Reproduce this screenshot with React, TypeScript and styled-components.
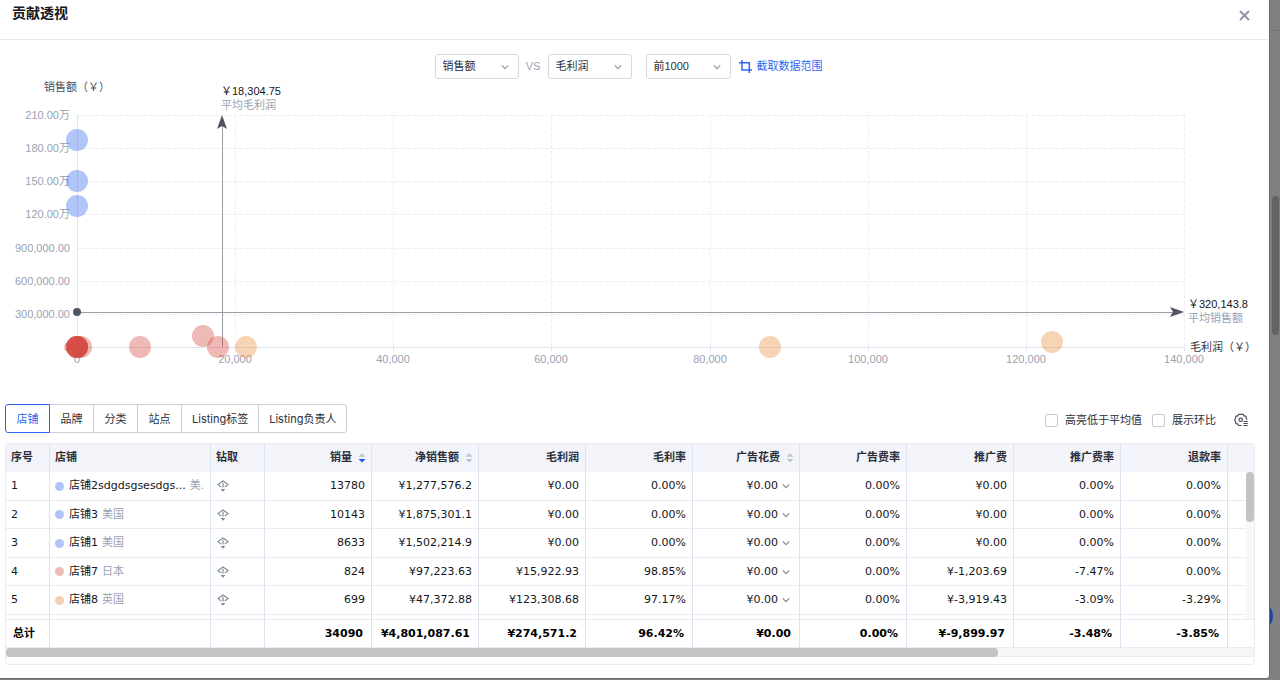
import React, { useState } from "react";
import styled, { createGlobalStyle, css } from "styled-components";

const color = {
  text: "#2b2e38",
  strong: "#14161c",
  muted: "#9aa1b3",
  blue: "#2f66f5",
  border: "#d6d9e0",
  cell: "#dde2f0",
  row: "#e9ebf6",
  head: "#f3f4f9",
};

const uiFont = '"Inter", "Noto Sans CJK SC", sans-serif';
const plainFont = '"Liberation Sans", "Noto Sans CJK SC", sans-serif';
const tableFont = '"DejaVu Sans", "Noto Sans CJK SC", sans-serif';

const GlobalStyle = createGlobalStyle`
  *, *::before, *::after { box-sizing: border-box; }
  body {
    margin: 0;
    background: #808080;
    color: ${color.text};
    font-family: ${uiFont};
    font-size: 11px;
    line-height: 16px;
  }
  button, select, input { font: inherit; color: inherit; margin: 0; }
  button { background: none; border: 0; padding: 0; cursor: pointer; }
`;

const Backdrop = styled.div`
  position: relative;
  padding: 0 11px 2px 0;
  overflow: hidden;
  background: linear-gradient(#747474, #747474) 0 30px / 100% 1px no-repeat #808080;
`;

const PageThumb = styled.div`
  position: absolute;
  top: 196px;
  right: 1px;
  width: 7px;
  height: 139px;
  border-radius: 4px;
  background: #636363;
`;

const HelpBubble = styled.div`
  position: absolute;
  top: 601px;
  right: 7px;
  width: 30px;
  height: 30px;
  border-radius: 50%;
  background: #1f419c;
`;

const Dialog = styled.section`
  position: relative;
  background: #fff;
  border-radius: 0 0 3px 0;
  box-shadow: 1px 0 0 #6c6c6c, 0 1px 0 #6c6c6c;
  padding-bottom: 13px;
`;

const DialogHeader = styled.header`
  display: flex;
  align-items: flex-start;
  justify-content: space-between;
  height: 40px;
  padding: 3px 19px 0 12px;
  border-bottom: 1px solid #e9eaec;
`;

const Title = styled.h2`
  margin: 0;
  font-size: 14px;
  line-height: 20px;
  font-weight: 600;
  color: ${color.strong};
`;

const IconButton = styled.button`
  display: inline-flex;
  align-items: center;
  justify-content: center;
  color: ${(p) => p.color || "#7f8799"};
`;

const CloseButton = styled(IconButton)`
  height: 25px;
`;

const Filters = styled.div`
  display: flex;
  align-items: center;
  justify-content: center;
  height: 40px;
  padding: 12px 12px 0 0;
  font-family: ${plainFont};
`;

const SelectBox = styled.div<{ $width: number }>`
  position: relative;
  width: ${(p) => p.$width}px;
  svg {
    position: absolute;
    right: 10px;
    top: 9px;
    pointer-events: none;
    color: #8e94a3;
  }
`;

const Select = styled.select`
  appearance: none;
  display: block;
  width: 100%;
  height: 25px;
  padding: 0 20px 0 7px;
  border: 1px solid ${color.border};
  border-radius: 3px;
  background: #fff;
`;

const Versus = styled.span`
  width: 29px;
  text-align: center;
  color: ${color.muted};
`;

const RangeFilter = styled.div`
  display: flex;
  align-items: center;
  gap: 8px;
  margin-left: 14px;
`;

const CropButton = styled.button`
  display: flex;
  align-items: center;
  gap: 5px;
  color: ${color.blue};
`;

const Chart = styled.svg`
  display: block;
  width: 100%;
  height: auto;
  font-family: ${plainFont};
  font-size: 11px;
`;

const Panel = styled.div`
  padding: 19px 14px 0 5px;
`;

const PanelBar = styled.div`
  display: flex;
  align-items: center;
  justify-content: space-between;
  margin-bottom: 10px;
`;

const Tabs = styled.div`
  display: flex;
`;

const Tab = styled.button<{ $active: boolean }>`
  position: relative;
  min-width: 45px;
  height: 29px;
  padding: 0 10px;
  border: 1px solid #ccced4;
  background: #fff;
  & + & { margin-left: -1px; }
  &:first-child { border-radius: 3px 0 0 3px; }
  &:last-child { border-radius: 0 3px 3px 0; }
  ${(p) =>
    p.$active &&
    css`
      z-index: 1;
      border-color: ${color.blue};
      color: ${color.blue};
    `}
`;

const Options = styled.div`
  display: flex;
  align-items: center;
  gap: 10px;
  padding: 3px 7px 0 0;
`;

const CheckLabel = styled.label`
  display: flex;
  align-items: center;
  gap: 7px;
`;

const Checkbox = styled.input`
  appearance: none;
  width: 13px;
  height: 13px;
  border: 1px solid #c6c9d0;
  border-radius: 2px;
  background: #fff;
  &:checked { background: ${color.blue}; border-color: ${color.blue}; }
`;

const SettingsButton = styled(IconButton)`
  margin-left: 8px;
`;

const TableCard = styled.div`
  position: relative;
  padding-bottom: 7px;
  border: 1px solid ${color.row};
  border-radius: 3px;
  overflow: hidden;
`;

const Table = styled.table`
  width: 100%;
  table-layout: fixed;
  border-collapse: separate;
  border-spacing: 0;
  font-family: ${tableFont};
  color: ${color.strong};
`;

const Cell = styled.td<{ $align?: "left" | "right"; $tight?: boolean }>`
  padding: 0 ${(p) => (p.$tight ? 9 : 6)}px 0 5px;
  border-right: 1px solid ${color.cell};
  border-bottom: 1px solid ${color.row};
  text-align: ${(p) => p.$align || "left"};
  white-space: nowrap;
  overflow: hidden;
  &:last-child { border-right: 0; }
`;

const HeadCell = styled(Cell)`
  height: 28px;
  padding-right: ${(p) => (p.$tight ? 5 : 6)}px;
  background: ${color.head};
  border-bottom: 0;
  font-weight: 600;
  color: ${color.text};
`;

const BodyRow = styled.tr`
  height: 29px;
  &:nth-child(even) { height: 28px; }
`;

const ClippedRow = styled.tr`
  height: 5px;
`;

const FootCell = styled(Cell)`
  height: 28px;
  padding: 0 8px 0 7px;
  font-weight: 700;
  color: #000;
`;

const SortButton = styled.button`
  display: inline-flex;
  align-items: center;
  gap: 6px;
`;

const Shop = styled.div`
  display: flex;
  align-items: center;
`;

const Dot = styled.span<{ $fill: string }>`
  flex: none;
  width: 9px;
  height: 9px;
  margin-right: 5px;
  border-radius: 50%;
  background: ${(p) => p.$fill};
`;

const Country = styled.span`
  margin-left: 4px;
  color: ${color.muted};
`;

const DrillButton = styled(IconButton)`
  display: flex;
  padding-left: 1px;
`;

const Cost = styled.span`
  display: inline-flex;
  align-items: center;
  gap: 4px;
`;

const VerticalTrack = styled.div`
  position: absolute;
  top: 28px;
  right: 0;
  width: 8px;
  height: 147px;
  background: #f8f8f9;
`;

const VerticalThumb = styled.div`
  height: 50px;
  border-radius: 4px;
  background: #c3c3c3;
`;

const HorizontalTrack = styled.div`
  height: 9px;
  background: #f6f6f7;
  border-bottom: 1px solid #ececef;
`;

const HorizontalThumb = styled.div`
  width: 79.5%;
  height: 9px;
  border-radius: 4px;
  background: #c3c3c3;
`;

const Chevron = ({ size = 8 }: { size?: number }) => (
  <svg width={size} height={size} viewBox="0 0 8 8" fill="none" stroke="currentColor" aria-hidden="true">
    <path d="M.8 2.4 4 5.6 7.2 2.4" strokeWidth="1.1" />
  </svg>
);

const CloseIcon = () => (
  <svg width="11" height="11" viewBox="0 0 11 11" fill="none" stroke="#8f96a6" aria-hidden="true">
    <path d="M1 1l9 9M10 1l-9 9" strokeWidth="2" />
  </svg>
);

const CropIcon = () => (
  <svg width="13" height="13" viewBox="0 0 13 13" fill="none" stroke="currentColor" aria-hidden="true">
    <path d="M3 0v10h10M0 2.7h10.3V13" strokeWidth="1.5" />
  </svg>
);

const DrillIcon = () => (
  <svg width="12" height="12" viewBox="0 0 12 12" fill="none" stroke="currentColor" aria-hidden="true">
    <path d="M4.2 7.1.9 4.5 6 1l5.1 3.5-3.3 2.6" strokeWidth="1.2" />
    <path d="M6 2.8v4.6" strokeWidth="1.2" />
    <path d="M3.6 8.9h4.8L6 11.7z" fill="currentColor" stroke="none" />
  </svg>
);

const SettingsIcon = () => (
  <svg width="14" height="14" viewBox="0 0 14 14" fill="none" stroke="currentColor" aria-hidden="true">
    <path
      d="M7.6 12.5H4.5L3.8 10.9 1.9 10.6 1.6 8.8.7 6.9l.9-1.8.3-1.9 1.9-.3.9-1.5h4.4l.9 1.5 1.9.3.3 1.9.8 1.4"
      strokeWidth="1.2"
      strokeLinejoin="round"
    />
    <circle cx="6.7" cy="6.8" r="1.7" strokeWidth="1.2" />
    <path d="M9.4 8.5h4.4M9.4 10.5h4.4M9.4 12.5h4.4" strokeWidth="1" />
  </svg>
);

const SortIcon = ({ down }: { down?: boolean }) => (
  <svg width="8" height="10" viewBox="0 0 8 10" aria-hidden="true">
    <path d="M.5 3.8 4 .3l3.5 3.5z" fill="#bfc3cc" />
    <path d="M.5 6 4 9.5 7.500 6z" fill={down ? "#1f56f0" : "#bfc3cc"} />
  </svg>
);

const plot = { left: 77, right: 1184, top: 35, bottom: 267, maxX: 140000, maxY: 2100000 };
const px = (v: number) => plot.left + Math.round((v / plot.maxX) * (plot.right - plot.left));
const py = (v: number) => plot.bottom - Math.round((v / plot.maxY) * (plot.bottom - plot.top));

const xTicks = [0, 20000, 40000, 60000, 80000, 100000, 120000, 140000];
const yTicks: [number, string][] = [
  [0, "0"],
  [300000, "300,000.00"],
  [600000, "600,000.00"],
  [900000, "900,000.00"],
  [1200000, "120.00万"],
  [1500000, "150.00万"],
  [1800000, "180.00万"],
  [2100000, "210.00万"],
];

const tone = { blue: "#2f62f0", red: "#d4403a", orange: "#e88a3a" };
const points: [number, number, string][] = [
  [0, 1875301.1, tone.blue],
  [0, 1502214.9, tone.blue],
  [0, 1277576.2, tone.blue],
  [500, 0, tone.red],
  [0, 0, tone.red],
  [0, 0, tone.red],
  [0, 0, tone.red],
  [0, 0, tone.red],
  [0, 0, tone.red],
  [8000, 0, tone.red],
  [15922.93, 97223.63, tone.red],
  [17800, 0, tone.red],
  [21400, 0, tone.orange],
  [87600, 0, tone.orange],
  [123308.68, 47372.88, tone.orange],
];

const average = { x: 18304.75, y: 320143.8 };

const ContributionChart = () => {
  const ax = px(average.x);
  const ay = py(average.y);
  return (
    <Chart viewBox="0 0 1269 305" role="img" aria-label="贡献透视">
      <g stroke="#eceef6" strokeDasharray="4 2" shapeRendering="crispEdges">
        {yTicks.slice(1).map(([v]) => (
          <line key={v} x1={plot.left} x2={plot.right} y1={py(v)} y2={py(v)} />
        ))}
        {xTicks.slice(1).map((v) => (
          <line key={v} x1={px(v)} x2={px(v)} y1={plot.top} y2={plot.bottom} />
        ))}
      </g>
      <g stroke="#dfe3ee" shapeRendering="crispEdges">
        <line x1={plot.left} x2={plot.left} y1={plot.top} y2={plot.bottom + 4} />
        <line x1={plot.left} x2={plot.right} y1={plot.bottom} y2={plot.bottom} />
        {xTicks.slice(1).map((v) => (
          <line key={v} x1={px(v)} x2={px(v)} y1={plot.bottom} y2={plot.bottom + 4} />
        ))}
      </g>
      <g fill={color.muted} textAnchor="end">
        {yTicks.map(([v, label]) => (
          <text key={v} x={70} y={py(v) + 4}>{label}</text>
        ))}
      </g>
      <g fill={color.muted} textAnchor="middle">
        {xTicks.map((v) => (
          <text key={v} x={px(v)} y={283}>{v.toLocaleString("en-US")}</text>
        ))}
      </g>
      <text x={44} y={11} fill="#4a4d55">销售额（￥）</text>
      <text x={1190} y={271} fill="#33363e">毛利润（￥）</text>

      <g stroke="#9b9ea5" shapeRendering="crispEdges">
        <line x1={ax} x2={ax} y1={plot.top + 8} y2={plot.bottom} />
        <line x1={plot.left} x2={plot.right - 10} y1={ay} y2={ay} />
      </g>
      <g fillOpacity=".37">
        {points.map(([x, y, fill], i) => (
          <circle key={i} cx={px(x)} cy={py(y)} r={11} fill={fill} />
        ))}
      </g>
      <g fill="#505562">
        <path d={`M${ax} ${plot.top}l5 14-5-3-5 3z`} />
        <path d={`M${plot.right} ${ay}l-14-5 3 5-3 5z`} />
        <circle cx={plot.left} cy={ay} r={4} />
      </g>
      <text x={221} y={15} fill="#14161c">￥18,304.75</text>
      <text x={221} y={29} fill={color.muted}>平均毛利润</text>
      <text x={1188} y={228} fill="#14161c">￥320,143.8</text>
      <text x={1188} y={242} fill={color.muted}>平均销售额</text>
    </Chart>
  );
};

type Column = { name: string; width?: number; align?: "left" | "right"; sort?: "none" | "down" };
const columns: Column[] = [
  { name: "序号", width: 44 },
  { name: "店铺", width: 161 },
  { name: "钻取", width: 54 },
  { name: "销量", width: 107, align: "right", sort: "down" },
  { name: "净销售额", width: 107, align: "right", sort: "none" },
  { name: "毛利润", width: 107, align: "right" },
  { name: "毛利率", width: 107, align: "right" },
  { name: "广告花费", width: 107, align: "right", sort: "none" },
  { name: "广告费率", width: 107, align: "right" },
  { name: "推广费", width: 107, align: "right" },
  { name: "推广费率", width: 107, align: "right" },
  { name: "退款率", width: 107, align: "right" },
  { name: "" },
];

const COST = 4;

type Row = { shop: string; country: string; dot: string; values: string[] };
const rows: Row[] = [
  { shop: "店铺2sdgdsgsesdgs...", country: "美.", dot: "#b1c4fa", values: ["13780", "¥1,277,576.2", "¥0.00", "0.00%", "¥0.00", "0.00%", "¥0.00", "0.00%", "0.00%"] },
  { shop: "店铺3", country: "美国", dot: "#b1c4fa", values: ["10143", "¥1,875,301.1", "¥0.00", "0.00%", "¥0.00", "0.00%", "¥0.00", "0.00%", "0.00%"] },
  { shop: "店铺1", country: "美国", dot: "#b1c4fa", values: ["8633", "¥1,502,214.9", "¥0.00", "0.00%", "¥0.00", "0.00%", "¥0.00", "0.00%", "0.00%"] },
  { shop: "店铺7", country: "日本", dot: "#efbab8", values: ["824", "¥97,223.63", "¥15,922.93", "98.85%", "¥0.00", "0.00%", "¥-1,203.69", "-7.47%", "0.00%"] },
  { shop: "店铺8", country: "英国", dot: "#f5d0b2", values: ["699", "¥47,372.88", "¥123,308.68", "97.17%", "¥0.00", "0.00%", "¥-3,919.43", "-3.09%", "-3.29%"] },
];

const totals = ["34090", "¥4,801,087.61", "¥274,571.2", "96.42%", "¥0.00", "0.00%", "¥-9,899.97", "-3.48%", "-3.85%"];
const tabs = ["店铺", "品牌", "分类", "站点", "Listing标签", "Listing负责人"];

const Dropdown = ({ label, width, options }: { label: string; width: number; options: string[] }) => (
  <SelectBox $width={width}>
    <Select aria-label={label}>
      {options.map((o) => (
        <option key={o}>{o}</option>
      ))}
    </Select>
    <Chevron />
  </SelectBox>
);

export default function App() {
  const [active, setActive] = useState(tabs[0]);
  return (
    <>
      <GlobalStyle />
      <Backdrop>
        <HelpBubble />
        <PageThumb />
        <Dialog role="dialog" aria-labelledby="dialog-title">
          <DialogHeader>
            <Title id="dialog-title">贡献透视</Title>
            <CloseButton aria-label="关闭"><CloseIcon /></CloseButton>
          </DialogHeader>

          <Filters>
            <Dropdown label="纵轴" width={84} options={["销售额"]} />
            <Versus>VS</Versus>
            <Dropdown label="横轴" width={84} options={["毛利润"]} />
            <RangeFilter>
              <Dropdown label="数量" width={85} options={["前1000"]} />
              <CropButton><CropIcon />截取数据范围</CropButton>
            </RangeFilter>
          </Filters>

          <ContributionChart />

          <Panel>
            <PanelBar>
              <Tabs>
                {tabs.map((t) => (
                  <Tab key={t} $active={t === active} onClick={() => setActive(t)}>{t}</Tab>
                ))}
              </Tabs>
              <Options>
                <CheckLabel><Checkbox type="checkbox" />高亮低于平均值</CheckLabel>
                <CheckLabel><Checkbox type="checkbox" />展示环比</CheckLabel>
                <SettingsButton color="#4a4e59" aria-label="设置"><SettingsIcon /></SettingsButton>
              </Options>
            </PanelBar>

            <TableCard>
              <Table>
                <colgroup>
                  {columns.map((c, i) => (
                    <col key={i} width={c.width} />
                  ))}
                </colgroup>
                <thead>
                  <tr>
                    {columns.map((c, i) => (
                      <HeadCell as="th" key={i} $align={c.align} $tight={!!c.sort}>
                        {c.sort ? (
                          <SortButton>{c.name}<SortIcon down={c.sort === "down"} /></SortButton>
                        ) : (
                          c.name
                        )}
                      </HeadCell>
                    ))}
                  </tr>
                </thead>
                <tbody>
                  {rows.map((r, i) => (
                    <BodyRow key={r.shop}>
                      <Cell>{i + 1}</Cell>
                      <Cell>
                        <Shop>
                          <Dot $fill={r.dot} />
                          {r.shop}
                          <Country>{r.country}</Country>
                        </Shop>
                      </Cell>
                      <Cell><DrillButton aria-label="钻取"><DrillIcon /></DrillButton></Cell>
                      {r.values.map((v, j) => (
                        <Cell key={j} $align="right" $tight={j === COST}>
                          {j === COST ? (
                            <Cost>{v}<IconButton aria-label="展开"><Chevron /></IconButton></Cost>
                          ) : (
                            v
                          )}
                        </Cell>
                      ))}
                      <Cell />
                    </BodyRow>
                  ))}
                  <ClippedRow>
                    {columns.map((_, i) => (
                      <Cell key={i} />
                    ))}
                  </ClippedRow>
                </tbody>
                <tfoot>
                  <tr>
                    <FootCell>总计</FootCell>
                    <FootCell />
                    <FootCell />
                    {totals.map((v, i) => (
                      <FootCell key={i} $align="right">{v}</FootCell>
                    ))}
                    <FootCell />
                  </tr>
                </tfoot>
              </Table>
              <VerticalTrack><VerticalThumb /></VerticalTrack>
              <HorizontalTrack><HorizontalThumb /></HorizontalTrack>
            </TableCard>
          </Panel>
        </Dialog>
      </Backdrop>
    </>
  );
}
